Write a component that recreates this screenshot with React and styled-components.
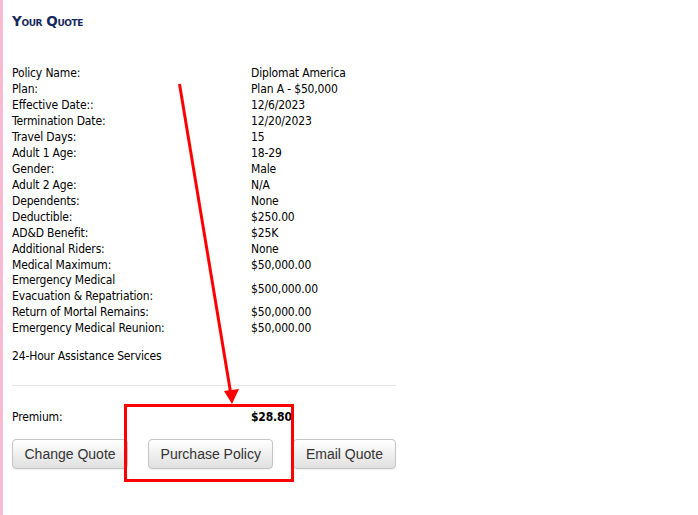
import styled, { createGlobalStyle } from "styled-components";

const Global = createGlobalStyle`
  html, body {
    margin: 0;
    padding: 0;
    background: #fff;
  }
  body {
    font-family: "DejaVu Sans Condensed", "DejaVu Sans", sans-serif;
  }
`;

const Page = styled.div`
  position: relative;
  width: 698px;
  height: 515px;
  overflow: hidden;
  box-shadow: inset 3px 0 0 #f8bad2;
  box-sizing: border-box;
  padding: 12px 0 0 12px;
`;

const Heading = styled.h3`
  margin: 1px 0 36px;
  font-family: "DejaVu Sans", sans-serif;
  font-variant: small-caps;
  font-weight: 700;
  font-size: 13.5px;
  letter-spacing: -0.4px;
  color: #13285a;
`;

const Table = styled.div`
  display: grid;
  grid-template-columns: 239px 145px;
  width: 384px;
  font-size: 12px;
  line-height: 16px;
  letter-spacing: -0.15px;
  color: #000;
`;

const Label = styled.div`
  line-height: ${(p) => (p.$tall ? "15.5px" : "16px")};
`;

const Value = styled.div`
  display: flex;
  align-items: center;
  font-weight: ${(p) => (p.$bold ? 700 : 400)};
`;

const Note = styled.div`
  margin-top: 12px;
  font-size: 12px;
  line-height: 16px;
  letter-spacing: -0.15px;
`;

const Rule = styled.hr`
  width: 384px;
  margin: 21px 0 23px;
  border: 0;
  border-top: 1px solid #e8e8e8;
`;

const Buttons = styled.div`
  display: flex;
  gap: 20px;
  margin-top: 14px;
`;

const Button = styled.button`
  font-family: "Liberation Sans", Arial, sans-serif;
  font-size: 14px;
  line-height: 18px;
  padding: 5px 11.5px;
  color: #333;
  background: linear-gradient(#ffffff, #e0e0e0);
  border: 1px solid #c4c4c4;
  border-radius: 4px;
  box-shadow: 0 1px 1px rgba(0, 0, 0, 0.06);
  cursor: pointer;
`;

const Markup = styled.svg`
  position: absolute;
  top: 0;
  left: 0;
  pointer-events: none;
`;

const rows = [
  ["Policy Name:", "Diplomat America"],
  ["Plan:", "Plan A - $50,000"],
  ["Effective Date::", "12/6/2023"],
  ["Termination Date:", "12/20/2023"],
  ["Travel Days:", "15"],
  ["Adult 1 Age:", "18-29"],
  ["Gender:", "Male"],
  ["Adult 2 Age:", "N/A"],
  ["Dependents:", "None"],
  ["Deductible:", "$250.00"],
  ["AD&D Benefit:", "$25K"],
  ["Additional Riders:", "None"],
  ["Medical Maximum:", "$50,000.00"],
  ["Emergency Medical\nEvacuation & Repatriation:", "$500,000.00"],
  ["Return of Mortal Remains:", "$50,000.00"],
  ["Emergency Medical Reunion:", "$50,000.00"],
];

export default function App() {
  return (
    <>
      <Global />
      <Page>
        <Heading>Your Quote</Heading>
        <Table>
          {rows.map(([label, value]) => {
            const tall = label.includes("\n");
            return [
              <Label key={label + "l"} $tall={tall}>
                {label.split("\n").map((line, i) => (
                  <div key={i}>{line}</div>
                ))}
              </Label>,
              <Value key={label + "v"}>{value}</Value>,
            ];
          })}
        </Table>
        <Note>24-Hour Assistance Services</Note>
        <Rule />
        <Table>
          <Label>Premium:</Label>
          <Value $bold>$28.80</Value>
        </Table>
        <Buttons>
          <Button>Change Quote</Button>
          <Button>Purchase Policy</Button>
          <Button>Email Quote</Button>
        </Buttons>
        <Markup width="698" height="515" viewBox="0 0 698 515">
          <line x1="179.5" y1="84" x2="231" y2="395" stroke="#ff0000" strokeWidth="3" />
          <polygon points="224,391 239,389 232,404" fill="#ff0000" />
          <rect x="125.5" y="405.5" width="167" height="75" fill="none" stroke="#ff0000" strokeWidth="3" />
        </Markup>
      </Page>
    </>
  );
}
